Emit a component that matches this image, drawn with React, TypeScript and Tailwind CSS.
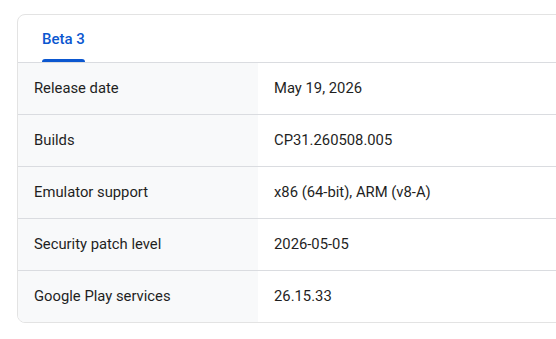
const rows = [
  { label: "Release date", value: "May 19, 2026" },
  { label: "Builds", value: "CP31.260508.005" },
  { label: "Emulator support", value: "x86 (64-bit), ARM (v8-A)" },
  { label: "Security patch level", value: "2026-05-05" },
  { label: "Google Play services", value: "26.15.33" },
];

export default function App() {
  return (
    <div
      className="w-[556px] h-[339px] overflow-hidden bg-white pl-[17px] pt-[14px]"
      style={{ fontFamily: "Roboto, 'Noto Sans', sans-serif" }}
    >
      <div className="w-[600px] rounded-lg border border-[#e3e3e3] overflow-hidden">
        <div className="flex h-[47px] pl-6">
          <div className="relative flex items-center pt-[1px] text-[15px] font-medium text-[#0b57d0]">
            Beta 3
            <span className="absolute bottom-0 left-0 right-0 h-[3px] rounded-t-[3px] bg-[#0b57d0]" />
          </div>
        </div>
        <div>
          {rows.map((row) => (
            <div key={row.label} className="flex h-[52px] border-t border-[#dadce0] text-[14.8px] text-[#1f1f1f]">
              <div className="w-[240px] bg-[#f8f9fa] flex items-center pl-4">{row.label}</div>
              <div className="flex items-center pl-4">{row.value}</div>
            </div>
          ))}
        </div>
      </div>
    </div>
  );
}
